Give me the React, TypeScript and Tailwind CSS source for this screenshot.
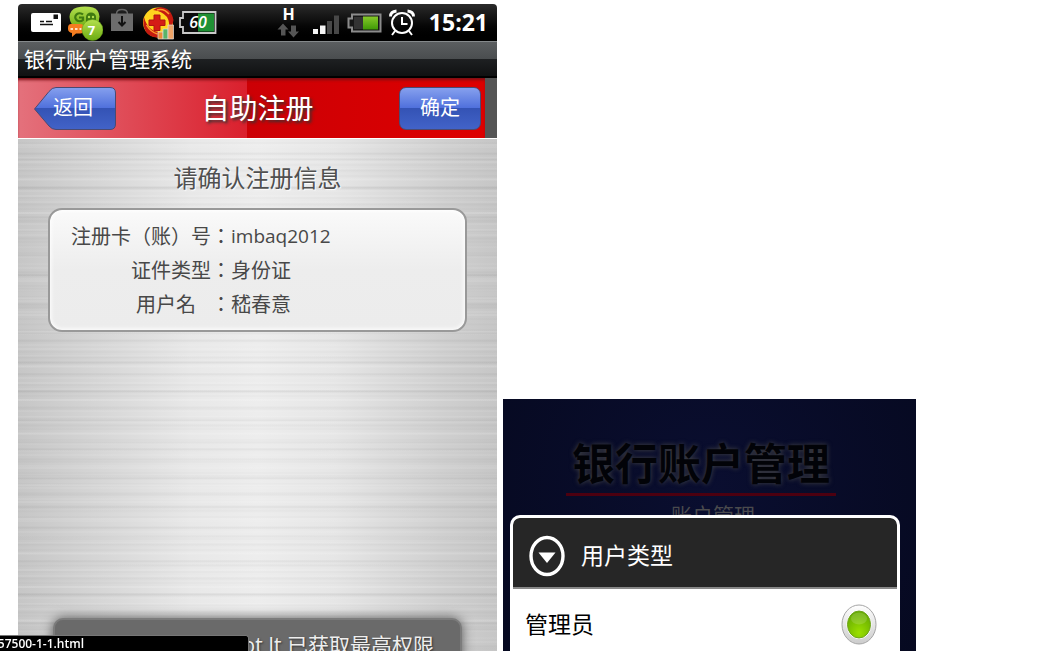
import React from "react";

const sans = "font-['Open_Sans','Noto_Sans_CJK_SC',sans-serif]";

function MailIcon() {
  return (
    <svg width="30" height="37" viewBox="0 0 30 37" aria-hidden="true">
      <rect x="0" y="9" width="30" height="19" rx="2" fill="#fff" />
      <rect x="22.500" y="10.500" width="4.500" height="4.500" fill="#111" />
      <path d="M9 17.500h4M15 17.500h6M9 20.500h13" stroke="#111" strokeWidth="1.600" />
    </svg>
  );
}

function GoIcon() {
  return (
    <svg width="35" height="37" viewBox="0 0 35 37" aria-hidden="true">
      <defs>
        <linearGradient id="go" x1="0" y1="0" x2="0" y2="1">
          <stop offset="0" stopColor="#b4e04e" />
          <stop offset="1" stopColor="#6cab12" />
        </linearGradient>
      </defs>
      <path d="M9 3.500Q17 1.500 25 3.500q6 2 6.500 9-.5 9-6.500 11-8 2-16 0Q2 21.500 1.500 13 2 5.500 9 3.500z" fill="url(#go)" />
      <path d="M15 10.500a4.500 4 0 1 0 0 5.500v-2.500h-4" fill="none" stroke="#3f7a10" strokeWidth="2.200" />
      <path d="M18 18v-5a5 4.500 0 0 1 10 0v5z" fill="#3f7a10" />
      <circle cx="21" cy="13" r="1.200" fill="#b4e04e" />
      <circle cx="25" cy="13" r="1.200" fill="#b4e04e" />
      <path d="M3 20h9q4 0 4 3.500v2q0 4-4 4H8l-4 3.500v-4q-4-1-4-4v-1q0-4 3-4z" fill="#f47d21" />
      <path d="M2.500 25h11" stroke="#ffe3c7" strokeWidth="2.200" strokeDasharray="2.500 2" />
      <circle cx="24.500" cy="26" r="10.500" fill="url(#go)" stroke="#5f9a14" strokeWidth="0.500" />
      <text x="23.500" y="31" textAnchor="middle" fontSize="13" fontWeight="700" fontFamily="Open Sans" fill="#fff">7</text>
    </svg>
  );
}

function BagIcon() {
  return (
    <svg width="23" height="37" viewBox="0 0 23 37" aria-hidden="true">
      <path d="M6.500 10q0-4.500 5.500-4.500t5.500 4.500" fill="none" stroke="#666" strokeWidth="1.500" />
      <rect x="1" y="9.500" width="22" height="17.500" fill="#6c6c6c" />
      <path d="M12 12v9M8.500 18l3.500 3.500 3.500-3.500" fill="none" stroke="#111" strokeWidth="2" />
    </svg>
  );
}

function CareIcon() {
  return (
    <svg width="32" height="37" viewBox="-3 0 32 37" className="overflow-visible" aria-hidden="true">
      <circle cx="15" cy="18.500" r="15" fill="#ffd51f" />
      <path d="M10 6Q17 1 24 5q5 3 6.500 11-1 7-4.500 10 1-8-2-13-5-6-14-7z" fill="#c41a10" />
      <path d="M14 6q7-2 12 4" fill="none" stroke="#ff9c2c" strokeWidth="1.500" />
      <path d="M1 13q2 8 7 12 5 4 11 3l-1 5Q8 35 3 28-1 21 1 13z" fill="#c41a10" />
      <path d="M3.500 21q4 7 11 9" fill="none" stroke="#ff9c2c" strokeWidth="1.500" />
      <path d="M11 11h6v5h5v5.500h-5v5h-6v-5H6V16h5z" fill="#d51c16" stroke="#b01410" />
      <path d="M15 28h5v7h-5z" fill="#e98a36" stroke="#ddd" strokeWidth="0.700" />
      <path d="M20 25h5v10h-5z" fill="#58b368" stroke="#ddd" strokeWidth="0.700" />
      <path d="M25 21h5.500v14H25z" fill="#efa468" stroke="#ddd" strokeWidth="0.700" />
    </svg>
  );
}

function ChargeIcon() {
  return (
    <svg width="38" height="37" viewBox="0 0 38 37" aria-hidden="true">
      <path d="M4 8h32.500v21H4v-6H1v-9h3z" fill="#0b0b0b" stroke="#c9c9c9" strokeWidth="1.800" />
      <rect x="19" y="9.500" width="16" height="18" fill="#1f9134" />
      <text x="19" y="24" textAnchor="middle" fontSize="16" fontWeight="600" fontStyle="italic" fontFamily="Open Sans" fill="#fff">60</text>
    </svg>
  );
}

function DataIcon() {
  return (
    <svg width="29" height="37" viewBox="0 0 29 37" aria-hidden="true">
      <text x="11.500" y="16" textAnchor="middle" fontSize="16" fontWeight="700" fontFamily="Open Sans" fill="#fff">H</text>
      <path d="M6 19.500l5.500 6H8.500v6H4v-6H.500z" fill="#555" />
      <path d="M16.500 33.500l5.500-6h-3v-6h-5v6h-3z" fill="#555" />
    </svg>
  );
}

function SignalIcon() {
  return (
    <svg width="27" height="37" viewBox="0 0 27 37" aria-hidden="true">
      <path d="M0 25h5v5H0zM7 21.500h5.500V30H7z" fill="#f4f4f4" />
      <path d="M14 17h5v13h-5zM21 11.500h5V30h-5z" fill="#484848" />
    </svg>
  );
}

function BatteryIcon() {
  return (
    <svg width="35" height="37" viewBox="0 0 35 37" aria-hidden="true">
      <defs>
        <linearGradient id="cell" x1="0" y1="0" x2="0" y2="1">
          <stop offset="0" stopColor="#86c92a" />
          <stop offset="1" stopColor="#3f9a06" />
        </linearGradient>
      </defs>
      <path d="M5 10.500h28.500v17H5v-4H1.500v-9H5z" fill="#171717" stroke="#8b8b8b" strokeWidth="2" />
      <rect x="7" y="13" width="9" height="12" fill="#333" />
      <rect x="16" y="12.500" width="15" height="13" fill="url(#cell)" />
    </svg>
  );
}

function AlarmIcon() {
  return (
    <svg width="33" height="37" viewBox="0 0 33 37" fill="none" stroke="#fff" strokeWidth="2" aria-hidden="true">
      <circle cx="13" cy="19" r="10" />
      <path d="M13 13v7h5.500" />
      <path d="M6 27l-3 4M20 27l3 4" />
      <path d="M1.500 12.500q0-5 6-5.500M24.500 12.500q0-5-6-5.500" strokeWidth="2.800" />
    </svg>
  );
}

function StatusBar() {
  return (
    <div className="flex h-[37px] items-center justify-between rounded-t-sm bg-linear-to-b from-[#2b2b2b] via-[#0c0c0c] to-black pr-[9px] pl-[13px]">
      <div className="flex gap-[7px]">
        <MailIcon />
        <GoIcon />
        <BagIcon />
        <CareIcon />
        <ChargeIcon />
      </div>
      <div className="flex items-center gap-[7px]">
        <DataIcon />
        <SignalIcon />
        <BatteryIcon />
        <AlarmIcon />
        <time className="text-[23px] leading-none font-bold text-white">15:21</time>
      </div>
    </div>
  );
}

const blue = "bg-[linear-gradient(#86a0ee,#4f70dc_49%,#3453b5_50%,#4263c8)]";

function ConfirmScreen() {
  return (
    <section className="flex flex-col overflow-hidden">
      <StatusBar />
      <div className="flex h-[37px] shrink-0 items-center border-t border-b-2 border-t-[#85898b] border-b-black bg-[linear-gradient(#5b5e60,#4a4d4f_50%,#1e2022_50%,#101112)] pl-[6px]">
        <h1 className="text-[21px] leading-none text-white">银行账户管理系统</h1>
      </div>
      <header className="flex shrink-0 border-b border-white bg-[#555]">
        <div className="mr-3 flex h-[60px] flex-1 items-center justify-between bg-[linear-gradient(to_right,#e4717c,#da202d_49%,#cc0005_49%,#dd0000)] pr-1 pl-4 shadow-[inset_0_3px_3px_-1px_#7a1016]">
          <button type="button" className="relative isolate h-[43px] w-[82px] pr-1 text-center text-[20px] leading-none text-white">
            <svg className="absolute inset-0 -z-10 size-full" viewBox="0 0 82 43" aria-hidden="true">
              <defs>
                <linearGradient id="back" x1="0" y1="0" x2="0" y2="1">
                  <stop offset="0" stopColor="#86a0ee" />
                  <stop offset="0.490" stopColor="#4f70dc" />
                  <stop offset="0.500" stopColor="#3453b5" />
                  <stop offset="1" stopColor="#4263c8" />
                </linearGradient>
              </defs>
              <path d="M0.500 22 15 4.500Q18 0.500 22 0.500H76Q81.500 0.500 81.500 6V37Q81.500 42.500 76 42.500H22Q18 42.500 15 39z" fill="url(#back)" stroke="#4a4a72" />
            </svg>
            返回
          </button>
          <h2 className="text-[28px] leading-none text-white [text-shadow:2px_2px_3px_#333]">自助注册</h2>
          <button type="button" className={`h-[43px] w-[82px] rounded-[7px] border border-[#4a4a72] text-[20px] leading-none text-white ${blue}`}>
            确定
          </button>
        </div>
      </header>
      <div className="flex flex-1 flex-col bg-[repeating-linear-gradient(#fff0_0_5px,#ffffff2e_6px,#fff0_7px_13px,#00000008_14px,#fff0_17px),repeating-linear-gradient(#0000_0_3px,#00000007_4px,#0000_5px_7px,#ffffff22_8px,#0000_9px_11px),repeating-linear-gradient(#0000_0_19px,#0000000d_20px,#0000_22px_29px),linear-gradient(to_right,#c6c6c6,#d4d4d4_15%,#e8e8e8_36%,#ededed_50%,#e6e6e6_66%,#d0d0d0_88%,#c6c6c6)] px-[30px] pt-[27px]">
        <p className="text-center text-[24px] leading-[24px] text-[#505050] [text-shadow:1px_1px_1px_#fff]">请确认注册信息</p>
        <dl className="mt-[18px] grid grid-cols-[160px_auto] rounded-[14px] border-2 border-[#999] bg-linear-to-b from-[#fafafa] via-[#ededed] to-[#ececec] px-[21px] py-[9px] font-['Noto_Sans_CJK_TC',sans-serif] text-[20px] leading-[34px] text-[#484848] shadow-[inset_0_0_4px_1px_#fff]">
          <dt lang="zh-TW" className="text-right whitespace-nowrap">注册卡（账）号：</dt>
          <dd className="font-['Open_Sans',sans-serif] text-[19px] whitespace-nowrap">imbaq2012</dd>
          <dt lang="zh-TW" className="text-right">证件类型：</dt>
          <dd>身份证</dd>
          <dt lang="zh-TW" className="flex justify-end gap-[15px]">
            <span>用户名</span>
            <span>：</span>
          </dt>
          <dd>嵇春意</dd>
        </dl>
        <div role="status" className="mx-[5px] mt-[286px] flex h-[60px] shrink-0 justify-end rounded-[10px] border-2 border-[#7c7c7c] bg-[#6a6a6a] pt-[10px] pr-[26px] text-[21px] leading-[30px] whitespace-nowrap text-[#eee] shadow-[0_0_12px_#555] [text-shadow:1px_1px_2px_#333]">
          Root It 已获取最高权限
        </div>
      </div>
    </section>
  );
}

function RoleScreen() {
  return (
    <section className="flex flex-col items-center self-end bg-[radial-gradient(circle_at_50%_35%,#0a0e30,#060920)] pr-4 pl-[7px] pt-[42px]">
      <h2 className="mr-2 border-b-3 border-[#4c0010] px-[6px] pb-[7px] text-[43px] leading-[45px] font-bold whitespace-nowrap text-[#020308] [text-shadow:0_0_5px_#444]">
        银行账户管理
      </h2>
      <div className="ml-4 flex h-[19px] items-start overflow-hidden pt-2">
        <p className="text-[21px] leading-[22px] text-[#4a4a4d]">账户管理</p>
      </div>
      <form className="h-[136px] self-stretch overflow-hidden rounded-t-[10px] border-3 border-b-0 border-white bg-white">
        <div className="flex h-[71px] items-center gap-4 rounded-t-[6px] border-b-2 border-[#888] bg-[#262626] pt-[6px] pl-4">
          <svg width="36" height="42" viewBox="0 0 36 42" aria-hidden="true">
            <ellipse cx="18" cy="21" rx="16" ry="18.500" fill="none" stroke="#fff" strokeWidth="3.400" />
            <path d="M9.500 17.500h17L18 28z" fill="#fff" />
          </svg>
          <h3 className="text-[23px] leading-none text-white">用户类型</h3>
        </div>
        <label className="flex h-[71px] items-center justify-between pr-5 pl-3 text-[23px] leading-none text-black">
          管理员
          <span className="relative">
            <input type="radio" name="role" defaultChecked className="absolute inset-0 size-full opacity-0" />
            <svg width="36" height="42" viewBox="0 0 36 42" aria-hidden="true">
              <defs>
                <linearGradient id="rim" x1="0" y1="0" x2="0" y2="1">
                  <stop offset="0" stopColor="#fff" />
                  <stop offset="1" stopColor="#ccc" />
                </linearGradient>
                <radialGradient id="dot" cx="0.500" cy="0.800" r="0.800">
                  <stop offset="0" stopColor="#9be000" />
                  <stop offset="1" stopColor="#63a800" />
                </radialGradient>
              </defs>
              <ellipse cx="18" cy="20.500" rx="17" ry="19.500" fill="url(#rim)" stroke="#a5a5a5" />
              <ellipse cx="18" cy="20.500" rx="12.500" ry="14.500" fill="#fff" />
              <ellipse cx="18" cy="20.500" rx="11.500" ry="13.500" fill="url(#dot)" stroke="#6da31c" />
              <ellipse cx="18" cy="14.500" rx="8" ry="6" fill="#fff" opacity="0.150" />
            </svg>
          </span>
        </label>
      </form>
    </section>
  );
}

export default function App() {
  return (
    <main lang="zh-CN" className={`grid h-screen grid-cols-[479fr_413fr_137fr] grid-rows-[minmax(0,1fr)] gap-x-[6px] overflow-hidden bg-white pt-1 pl-[18px] ${sans}`}>
      <ConfirmScreen />
      <RoleScreen />
      <div className="fixed bottom-0 left-0 flex h-4 w-[249px] overflow-hidden rounded-tr-[3px] border-t border-r border-[#777] bg-black">
        <span className="flex w-[84px] justify-end font-['Open_Sans',sans-serif] text-[12px] leading-[15px] font-semibold whitespace-nowrap text-white">57500-1-1.html</span>
      </div>
    </main>
  );
}
